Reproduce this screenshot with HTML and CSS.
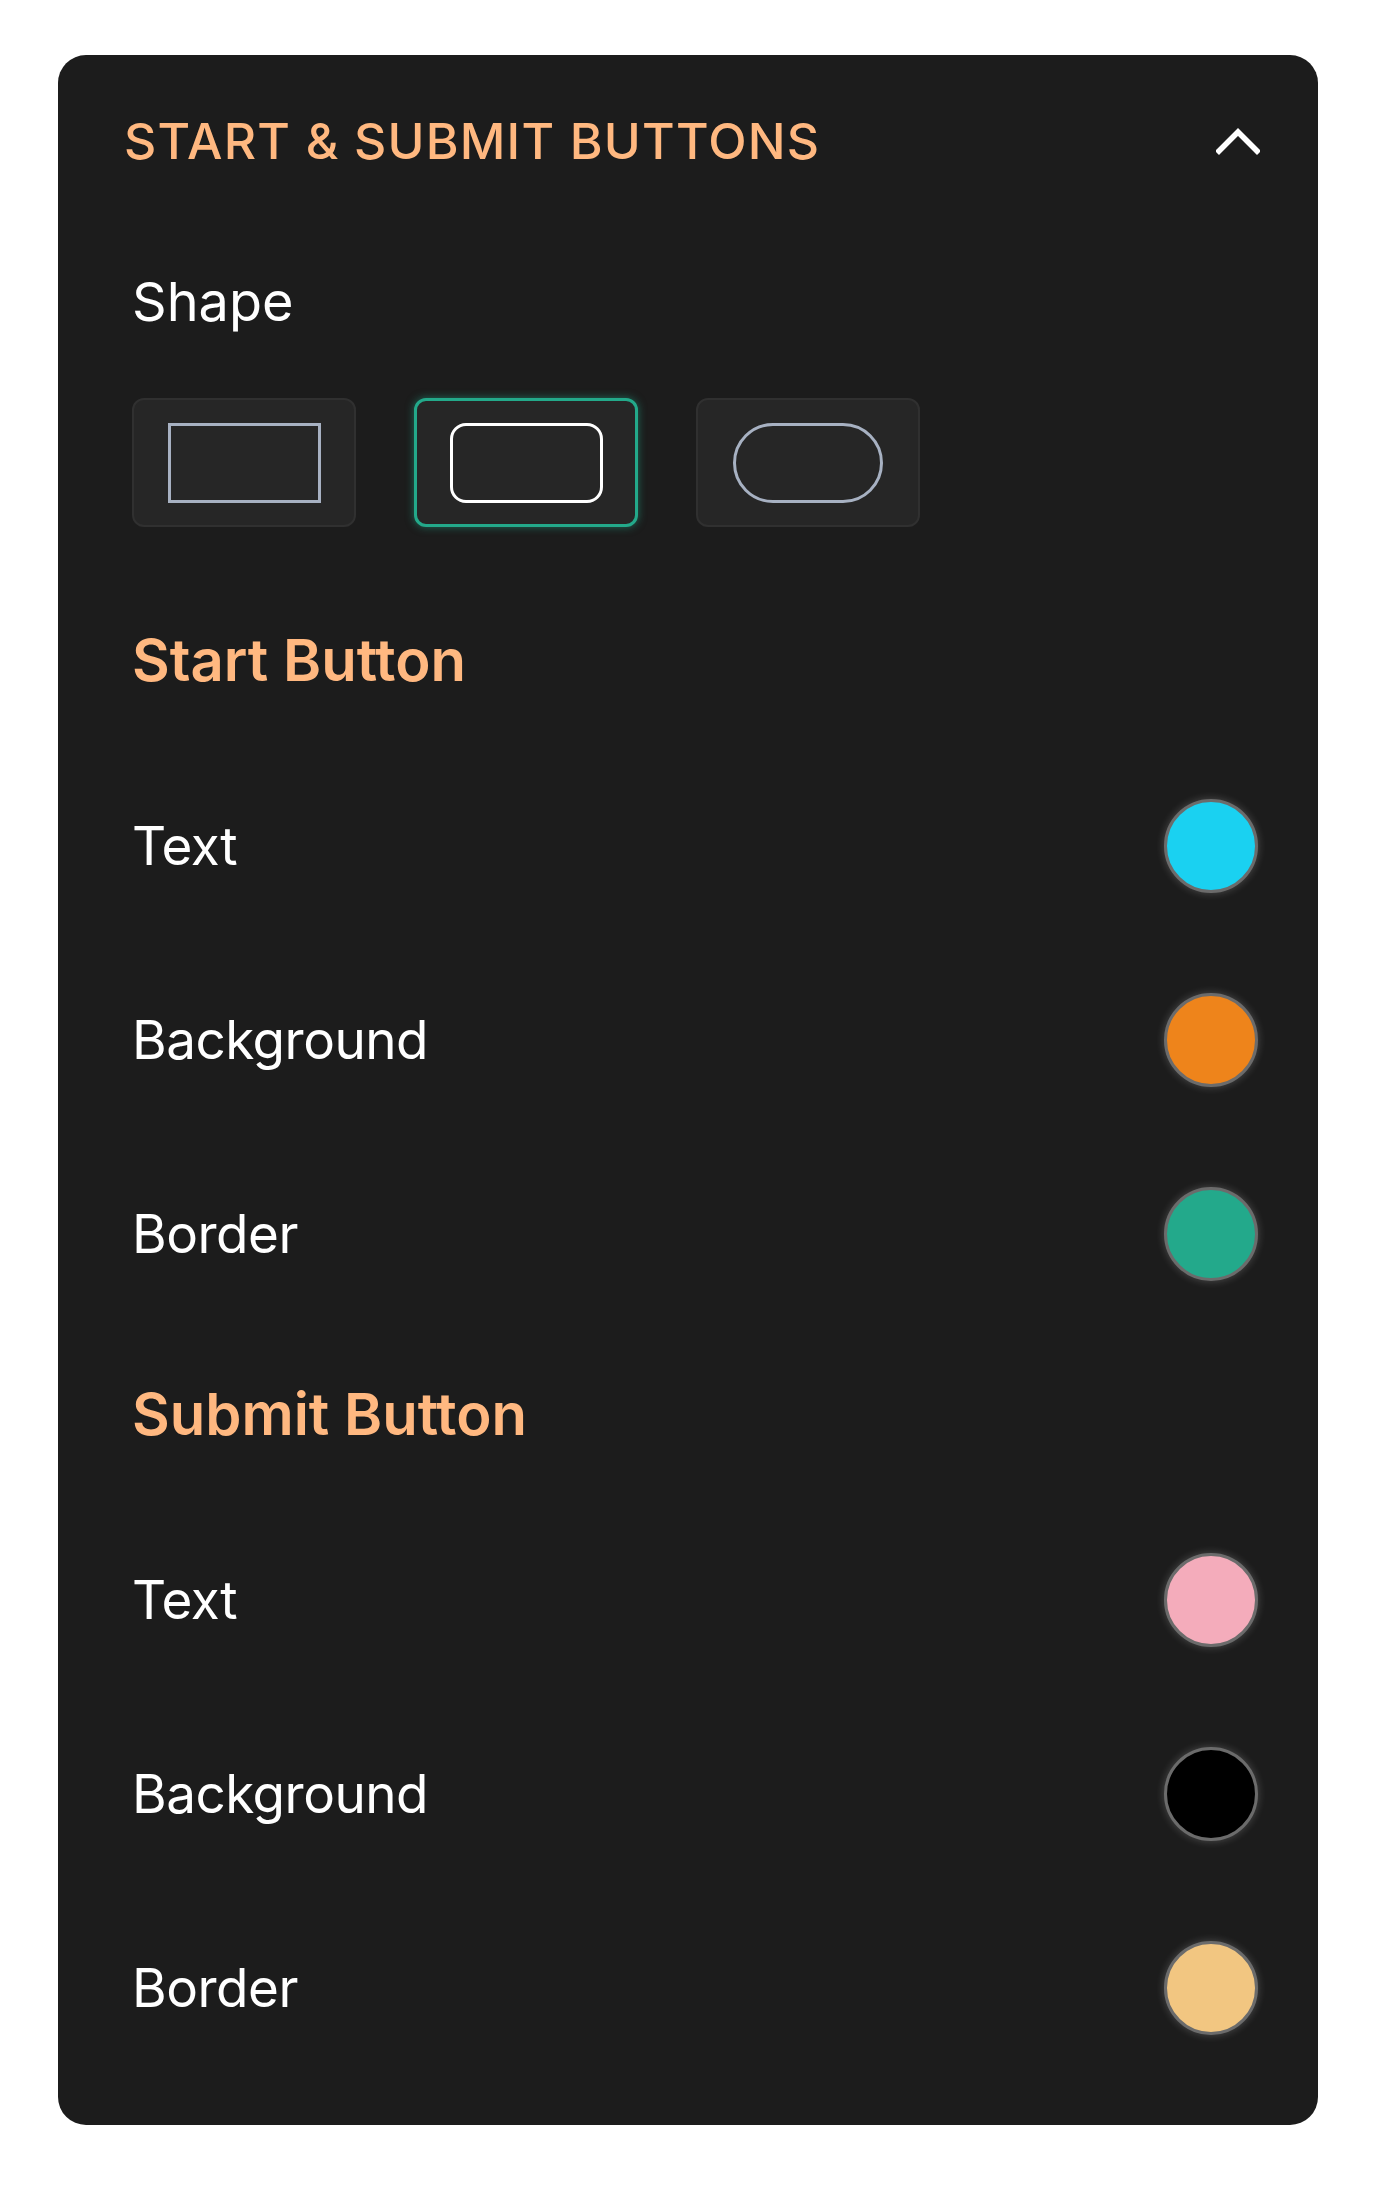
FILE: index.html
```html
<!DOCTYPE html>
<html lang="en">
<head>
    <meta charset="UTF-8">
    <meta name="viewport" content="width=device-width, initial-scale=1.0">
    <title>Start &amp; Submit Buttons</title>
    <link rel="stylesheet" href="styles.css">
</head>
<body>
    <div class="panel">
        <div class="panel-header">
            <h2 class="panel-title">START &amp; SUBMIT BUTTONS</h2>
            <button class="collapse-btn" aria-label="Collapse">
                <svg width="44" height="28" viewBox="0 0 44 28">
                    <polyline points="3,24 22,5 41,24" fill="none" stroke="#fff" stroke-width="5.5" stroke-linecap="square" stroke-linejoin="miter"/>
                </svg>
            </button>
        </div>

        <div class="panel-body">
            <div class="field-label">Shape</div>
            <div class="shape-options">
                <div class="shape-option">
                    <span class="shape shape-square"></span>
                </div>
                <div class="shape-option selected">
                    <span class="shape shape-rounded"></span>
                </div>
                <div class="shape-option">
                    <span class="shape shape-pill"></span>
                </div>
            </div>

            <h3 class="group-title">Start Button</h3>
            <div class="color-row">
                <span class="row-label">Text</span>
                <span class="swatch swatch-cyan"></span>
            </div>
            <div class="color-row">
                <span class="row-label">Background</span>
                <span class="swatch swatch-orange"></span>
            </div>
            <div class="color-row">
                <span class="row-label">Border</span>
                <span class="swatch swatch-teal"></span>
            </div>

            <h3 class="group-title">Submit Button</h3>
            <div class="color-row">
                <span class="row-label">Text</span>
                <span class="swatch swatch-pink"></span>
            </div>
            <div class="color-row">
                <span class="row-label">Background</span>
                <span class="swatch swatch-black"></span>
            </div>
            <div class="color-row">
                <span class="row-label">Border</span>
                <span class="swatch swatch-sand"></span>
            </div>
        </div>
    </div>
</body>
</html>
```

FILE: styles.css
```css
body {
    margin: 0;
    background-color: #fff;
    font-family: Inter, "Noto Sans", sans-serif;
}
.panel {
    width: 1260px;
    margin: 55px 0 0 58px;
    padding-bottom: 90px;
    background-color: #1c1c1c;
    border-radius: 28px;
    box-sizing: border-box;
}
.panel-header {
    display: flex;
    align-items: center;
    justify-content: space-between;
    padding: 56px 58px 0 66px;
    height: 60px;
    box-sizing: content-box;
}
.panel-title {
    margin: 0;
    font-size: 50px;
    line-height: 60px;
    font-weight: 500;
    letter-spacing: 1.2px;
    color: #ffb880;
}
.collapse-btn {
    background: none;
    border: none;
    padding: 0;
    display: flex;
    cursor: pointer;
}
.panel-body {
    padding: 0 60px 0 74px;
}
.field-label {
    margin-top: 101px;
    font-size: 54px;
    line-height: 60px;
    color: #fff;
}
.shape-options {
    display: flex;
    gap: 58px;
    margin-top: 66px;
}
.shape-option {
    width: 224px;
    height: 129px;
    display: flex;
    align-items: center;
    justify-content: center;
    background-color: #262626;
    border: 2px solid #303030;
    border-radius: 12px;
    box-sizing: border-box;
}
.shape-option.selected {
    border: 3px solid #23a98a;
    box-shadow: 0 0 9px rgba(35, 169, 138, 0.55);
}
.shape {
    width: 153px;
    height: 80px;
    border: 3.5px solid #a7b1c2;
    box-sizing: border-box;
}
.shape-rounded {
    border-color: #fff;
    border-radius: 16px;
}
.shape-pill {
    width: 150px;
    border-radius: 40px;
}
.group-title {
    margin: 98px 0 0;
    font-size: 58px;
    line-height: 70px;
    font-weight: 600;
    color: #ffb880;
}
.color-row {
    display: flex;
    align-items: center;
    justify-content: space-between;
    height: 94px;
    margin-top: 100px;
}
.group-title + .color-row {
    margin-top: 104px;
}
.row-label {
    font-size: 53px;
    letter-spacing: -0.5px;
    color: #fff;
}
.swatch {
    width: 94px;
    height: 94px;
    border-radius: 50%;
    border: 3px solid #6b6b6b;
    box-sizing: border-box;
    box-shadow: 0 0 8px rgba(255, 255, 255, 0.22);
}
.swatch-cyan { background-color: #1ad1f1; }
.swatch-orange { background-color: #ee841b; }
.swatch-teal { background-color: #23a98b; }
.swatch-pink { background-color: #f4acbb; }
.swatch-black { background-color: #000; }
.swatch-sand { background-color: #f2c681; }
```
